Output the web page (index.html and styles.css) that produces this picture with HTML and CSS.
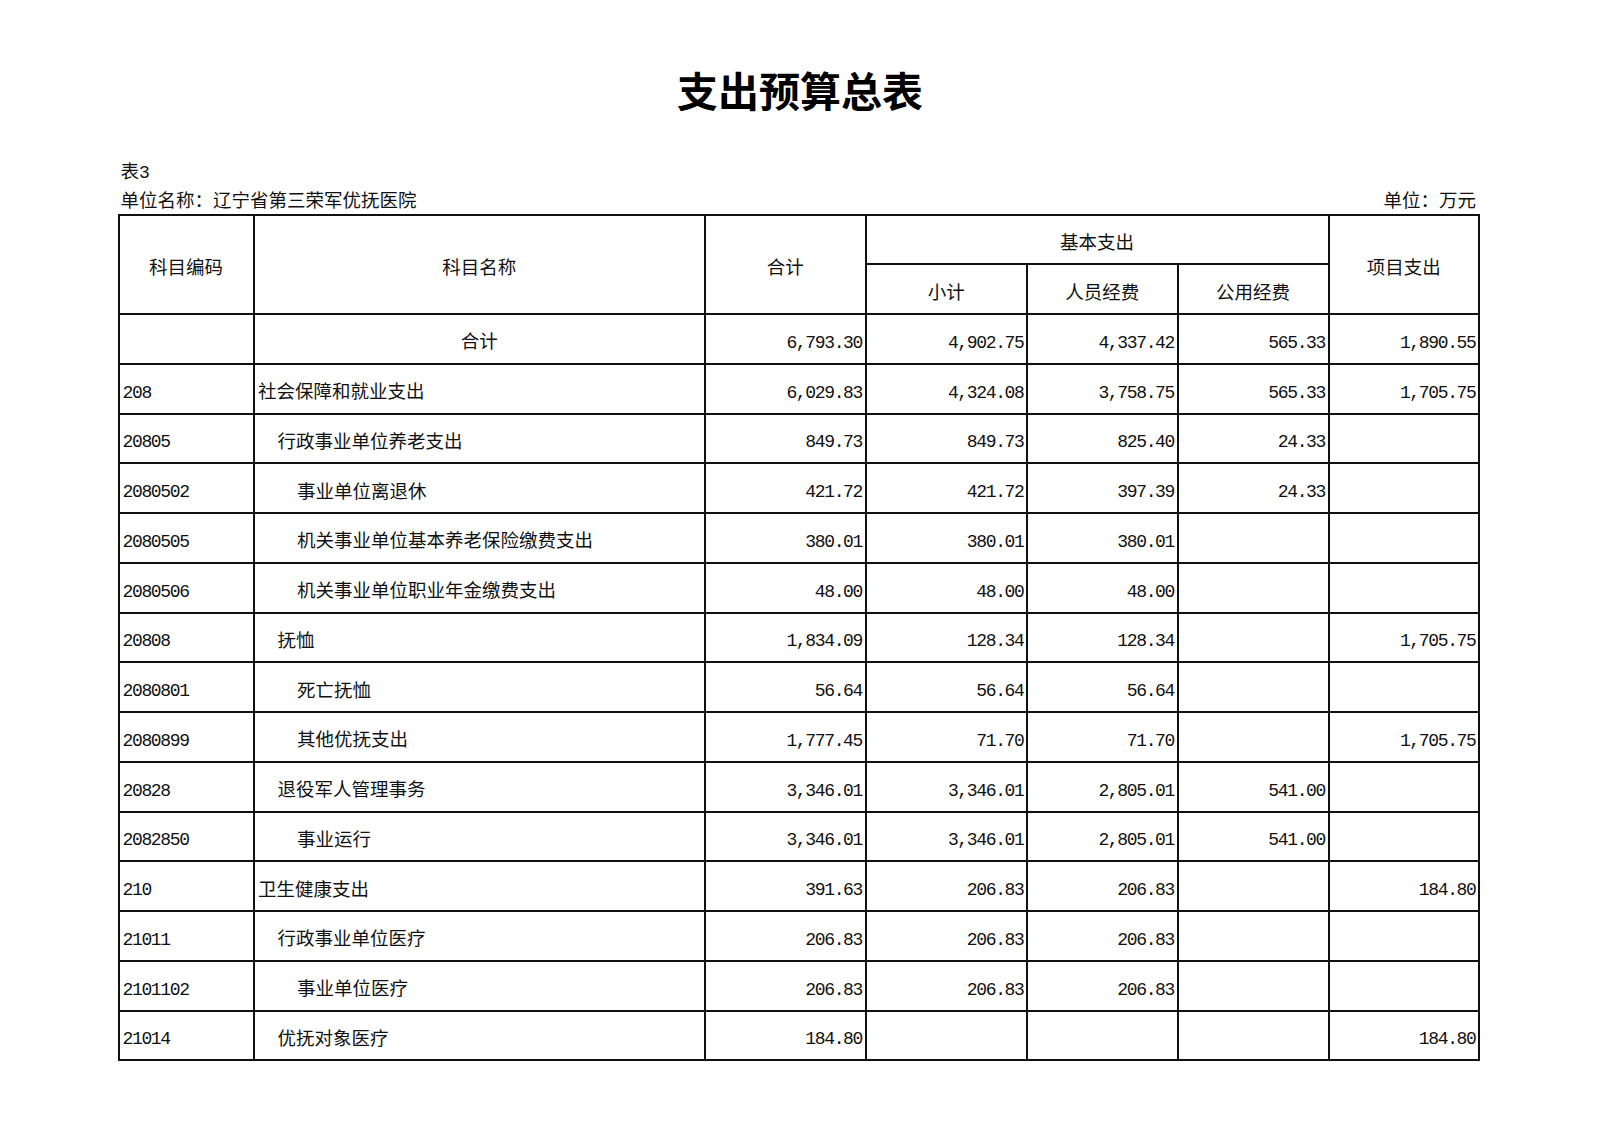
FILE: index.html
```html
<!DOCTYPE html>
<html lang="zh-CN">
<head>
<meta charset="utf-8">
<title>支出预算总表</title>
<link rel="stylesheet" href="styles.css">
</head>
<body>
<div class="page">
  <h1 class="title">支出预算总表</h1>
  <div class="sheet">
    <div class="meta-line"><span class="cjk">表</span><span class="num">3</span></div>
    <div class="meta-line meta-split">
      <span class="cjk">单位名称：辽宁省第三荣军优抚医院</span>
      <span class="cjk">单位：万元</span>
    </div>
    <table class="grid">
      <colgroup>
        <col class="c-code">
        <col class="c-name">
        <col class="c-total">
        <col class="c-sub">
        <col class="c-staff">
        <col class="c-public">
        <col class="c-project">
      </colgroup>
      <thead>
        <tr class="hr1">
          <th rowspan="2">科目编码</th>
          <th rowspan="2">科目名称</th>
          <th rowspan="2">合计</th>
          <th colspan="3">基本支出</th>
          <th rowspan="2">项目支出</th>
        </tr>
        <tr class="hr2">
          <th>小计</th>
          <th>人员经费</th>
          <th>公用经费</th>
        </tr>
      </thead>
      <tbody>
        <tr><td class="code"></td><td class="name center">合计</td><td class="num">6,793.30</td><td class="num">4,902.75</td><td class="num">4,337.42</td><td class="num">565.33</td><td class="num">1,890.55</td></tr>
        <tr><td class="code num-l">208</td><td class="name l1">社会保障和就业支出</td><td class="num">6,029.83</td><td class="num">4,324.08</td><td class="num">3,758.75</td><td class="num">565.33</td><td class="num">1,705.75</td></tr>
        <tr><td class="code num-l">20805</td><td class="name l2">行政事业单位养老支出</td><td class="num">849.73</td><td class="num">849.73</td><td class="num">825.40</td><td class="num">24.33</td><td class="num"></td></tr>
        <tr><td class="code num-l">2080502</td><td class="name l3">事业单位离退休</td><td class="num">421.72</td><td class="num">421.72</td><td class="num">397.39</td><td class="num">24.33</td><td class="num"></td></tr>
        <tr><td class="code num-l">2080505</td><td class="name l3">机关事业单位基本养老保险缴费支出</td><td class="num">380.01</td><td class="num">380.01</td><td class="num">380.01</td><td class="num"></td><td class="num"></td></tr>
        <tr><td class="code num-l">2080506</td><td class="name l3">机关事业单位职业年金缴费支出</td><td class="num">48.00</td><td class="num">48.00</td><td class="num">48.00</td><td class="num"></td><td class="num"></td></tr>
        <tr><td class="code num-l">20808</td><td class="name l2">抚恤</td><td class="num">1,834.09</td><td class="num">128.34</td><td class="num">128.34</td><td class="num"></td><td class="num">1,705.75</td></tr>
        <tr><td class="code num-l">2080801</td><td class="name l3">死亡抚恤</td><td class="num">56.64</td><td class="num">56.64</td><td class="num">56.64</td><td class="num"></td><td class="num"></td></tr>
        <tr><td class="code num-l">2080899</td><td class="name l3">其他优抚支出</td><td class="num">1,777.45</td><td class="num">71.70</td><td class="num">71.70</td><td class="num"></td><td class="num">1,705.75</td></tr>
        <tr><td class="code num-l">20828</td><td class="name l2">退役军人管理事务</td><td class="num">3,346.01</td><td class="num">3,346.01</td><td class="num">2,805.01</td><td class="num">541.00</td><td class="num"></td></tr>
        <tr><td class="code num-l">2082850</td><td class="name l3">事业运行</td><td class="num">3,346.01</td><td class="num">3,346.01</td><td class="num">2,805.01</td><td class="num">541.00</td><td class="num"></td></tr>
        <tr><td class="code num-l">210</td><td class="name l1">卫生健康支出</td><td class="num">391.63</td><td class="num">206.83</td><td class="num">206.83</td><td class="num"></td><td class="num">184.80</td></tr>
        <tr><td class="code num-l">21011</td><td class="name l2">行政事业单位医疗</td><td class="num">206.83</td><td class="num">206.83</td><td class="num">206.83</td><td class="num"></td><td class="num"></td></tr>
        <tr><td class="code num-l">2101102</td><td class="name l3">事业单位医疗</td><td class="num">206.83</td><td class="num">206.83</td><td class="num">206.83</td><td class="num"></td><td class="num"></td></tr>
        <tr><td class="code num-l">21014</td><td class="name l2">优抚对象医疗</td><td class="num">184.80</td><td class="num"></td><td class="num"></td><td class="num"></td><td class="num">184.80</td></tr>
      </tbody>
    </table>
  </div>
</div>
</body>
</html>
```

FILE: styles.css
```css
html, body {
  margin: 0;
  padding: 0;
  background: #ffffff;
  color: #111111;
}

.page {
  width: 1600px;
  padding-top: 69px;
  font-family: "Noto Sans CJK SC", "Liberation Serif", sans-serif;
}

.title {
  margin: 0;
  font-size: 41px;
  line-height: 41px;
  font-weight: 700;
  text-align: center;
  color: #000;
  letter-spacing: 0;
}

.sheet {
  margin-left: 117.5px;
  width: 1362.5px;
  margin-top: 51px;
}

.meta-line {
  font-size: 18.5px;
  line-height: 19px;
  height: 19px;
  color: #111;
  display: flex;
  align-items: baseline;
}

.meta-line + .meta-line {
  margin-top: 10px;
}

.meta-split {
  justify-content: space-between;
  padding-right: 4px;
  padding-left: 3px;
}

.meta-line:first-child {
  padding-left: 3px;
}

.meta-line .num {
  font-family: "Liberation Mono", monospace;
  font-size: 18px;
  letter-spacing: -1.35px;
}

.grid {
  margin-top: 5px;
  border-collapse: collapse;
  table-layout: fixed;
  width: 1362.5px;
  border: 2px solid #111;
}

.c-code { width: 135px; }
.c-name { width: 451.5px; }
.c-total { width: 160.5px; }
.c-sub { width: 161.5px; }
.c-staff { width: 150.5px; }
.c-public { width: 151px; }
.c-project { width: 150.5px; }

.grid th,
.grid td {
  border: 2px solid #111;
  padding: 3px 0 0 0;
  overflow: hidden;
  white-space: nowrap;
  vertical-align: middle;
}

.grid th {
  font-weight: 400;
  font-size: 18.5px;
  text-align: center;
  color: #111;
}

.hr1 { height: 49px; }
.hr2 { height: 50px; }

.grid tbody tr { height: 49.76px; }

.grid td.num {
  font-family: "Liberation Mono", monospace;
  font-size: 18px;
  letter-spacing: -1.35px;
  text-align: right;
  padding-top: 8px;
  padding-right: 2.5px;
  color: #111;
}

.grid td.num-l {
  font-family: "Liberation Mono", monospace;
  font-size: 18px;
  letter-spacing: -1.35px;
  text-align: left;
  padding-top: 8px;
  padding-left: 3px;
}

.grid td.name {
  font-size: 18.5px;
  text-align: left;
  color: #111;
}

.grid td.center { text-align: center; }
.grid td.l1 { padding-left: 3.5px; }
.grid td.l2 { padding-left: 23px; }
.grid td.l3 { padding-left: 42.5px; }
```
